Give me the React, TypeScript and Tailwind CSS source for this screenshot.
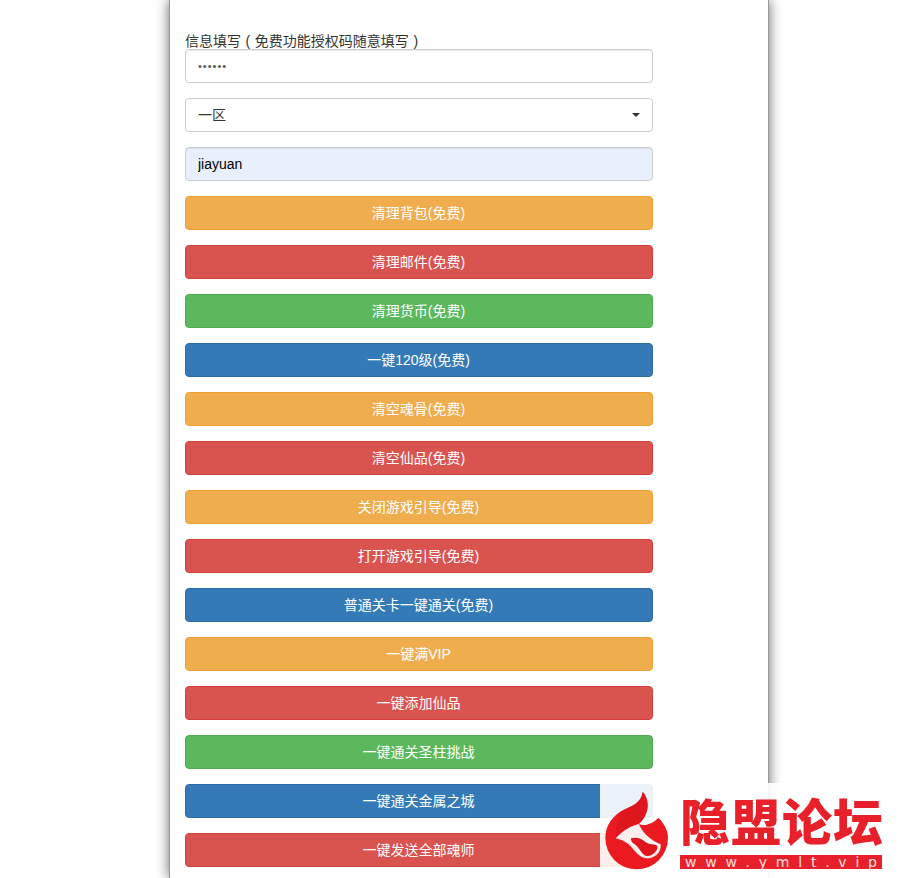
const actions = [
  { label: "清理背包(免费)", color: "warning" },
  { label: "清理邮件(免费)", color: "danger" },
  { label: "清理货币(免费)", color: "success" },
  { label: "一键120级(免费)", color: "primary" },
  { label: "清空魂骨(免费)", color: "warning" },
  { label: "清空仙品(免费)", color: "danger" },
  { label: "关闭游戏引导(免费)", color: "warning" },
  { label: "打开游戏引导(免费)", color: "danger" },
  { label: "普通关卡一键通关(免费)", color: "primary" },
  { label: "一键满VIP", color: "warning" },
  { label: "一键添加仙品", color: "danger" },
  { label: "一键通关圣柱挑战", color: "success" },
  { label: "一键通关金属之城", color: "primary" },
  { label: "一键发送全部魂师", color: "danger" },
];

const colors: Record<string, string> = {
  warning: "bg-[#f0ad4e] border-[#eea236]",
  danger: "bg-[#d9534f] border-[#d43f3a]",
  success: "bg-[#5cb85c] border-[#4cae4c]",
  primary: "bg-[#337ab7] border-[#2e6da4]",
};

function Watermark() {
  return (
    <div className="absolute left-[600px] top-[783px] h-[95px] w-[303px] bg-white/90">
      <svg viewBox="0 24 270 285" className="absolute left-[-5px] top-0 h-[95px] w-[90px]">
        <path
          fill="#ea1a20"
          d="M143 50C165 75 165 115 132 147C150 155 175 145 190 128C212 150 219 170 219 189A94 94 0 1 1 31 189C31 150 55 120 85 105C110 92 138 85 143 50Z"
        />
        <path
          fill="#c40f18"
          opacity="0.3"
          d="M143 50C165 75 165 115 132 147C110 152 85 165 62 190C60 160 70 125 85 105C110 92 138 85 143 50Z"
        />
        <path
          fill="#fbeeee"
          d="M62 190C85 165 110 152 132 147C140 170 165 195 197 208C200 235 175 252 155 250C130 248 120 225 100 207C88 198 75 193 62 190Z"
        />
        <path
          fill="#e0141c"
          d="M108 190C125 184 142 192 150 200C162 210 180 205 187 213C190 228 170 245 155 243C140 240 135 220 122 210C115 205 108 203 108 190Z"
        />
      </svg>
      <div className="absolute left-[80px] top-[6px] flex h-[60px] w-[203px] items-center justify-between text-[50px] leading-[60px] font-black text-[#e8202a] [font-family:'Noto_Sans_CJK_SC',sans-serif]">
        <span>隐</span>
        <span>盟</span>
        <span>论</span>
        <span>坛</span>
      </div>
      <div className="absolute left-[80px] top-[72px] flex h-[14px] w-[202px] items-center justify-between bg-[#e8202a] px-[5px] text-[14px] leading-[14px] text-white/85 [font-family:'DejaVu_Sans',sans-serif]">
        {"www.ymlt.vip".split("").map((c, i) => (
          <span key={i}>{c}</span>
        ))}
      </div>
    </div>
  );
}

export default function App() {
  return (
    <div className="relative h-[878px] w-[903px] overflow-hidden bg-white text-[14px] text-[#333] [font-family:'Liberation_Sans','Noto_Sans_CJK_SC',sans-serif]">
      <div className="ml-[169px] h-full w-[600px] border-x border-[#999] bg-white px-[15px] pt-[33px] shadow-[0_0_12px_rgba(0,0,0,0.6)]">
        <div className="h-[16px] w-[468px] leading-[17px] [word-spacing:0.7px]">信息填写 ( 免费功能授权码随意填写 )</div>
        <div className="flex w-[468px] flex-col gap-[15px]">
          <input
            type="password"
            readOnly
            value="123456"
            className="h-[34px] rounded border border-[#ccc] bg-white px-3 text-[11px] tracking-[1px] text-[#555] shadow-[inset_0_1px_1px_rgba(0,0,0,0.075)] outline-none"
          />
          <div className="flex h-[34px] items-center justify-between rounded border border-[#ccc] bg-white px-3">
            <span>一区</span>
            <span className="border-x-4 border-t-4 border-x-transparent border-t-[#333]" />
          </div>
          <input
            type="text"
            readOnly
            value="jiayuan"
            className="h-[34px] rounded border border-[#ccc] bg-[#e8f0fe] px-3 text-[14px] text-black shadow-[inset_0_1px_1px_rgba(0,0,0,0.075)] outline-none"
          />
          {actions.map((a) => (
            <button
              key={a.label}
              type="button"
              className={`h-[34px] rounded border pr-px text-center text-[14px] text-white ${colors[a.color]}`}
            >
              {a.label}
            </button>
          ))}
        </div>
      </div>
      <Watermark />
    </div>
  );
}
